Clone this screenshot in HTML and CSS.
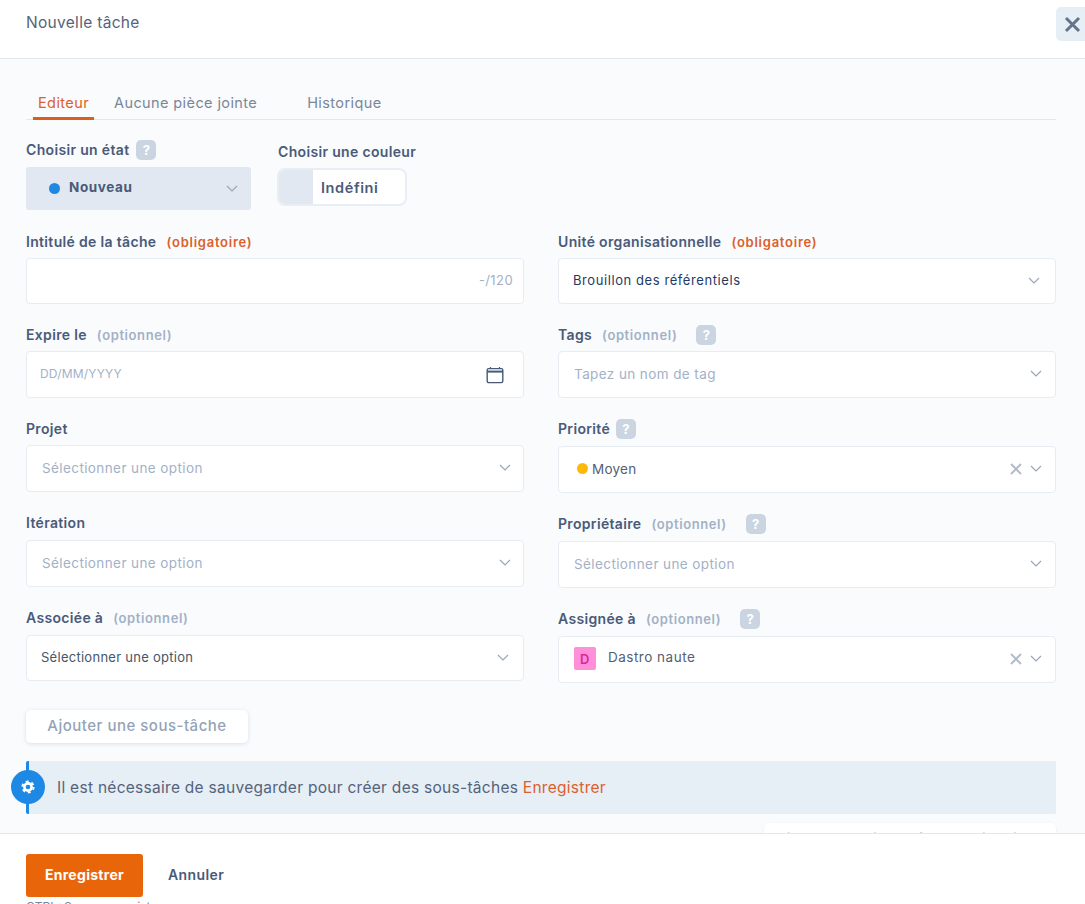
FILE: index.html
```html
<!DOCTYPE html>
<html lang="fr">
<head>
    <meta charset="UTF-8">
    <meta name="viewport" content="width=device-width, initial-scale=1.0">
    <title>Nouvelle tâche</title>
    <link rel="stylesheet" href="styles.css">
</head>
<body>
    <div class="modal">
        <header class="modal-header">
            <h1>Nouvelle tâche</h1>
            <button class="close-btn" type="button" aria-label="Fermer">
                <svg width="17" height="17" viewBox="0 0 17 17"><path d="M2 2l13 13M15 2L2 15" stroke="#64748b" stroke-width="3" fill="none"/></svg>
            </button>
        </header>

        <main class="modal-body">
            <nav class="tabs">
                <a class="tab active">Editeur</a>
                <a class="tab tab-files">Aucune pièce jointe</a>
                <a class="tab tab-history">Historique</a>
            </nav>

            <div class="state-row">
                <div class="state-col">
                    <div class="label-row">
                        <span class="label">Choisir un état</span>
                        <span class="help">?</span>
                    </div>
                    <div class="state-select">
                        <span class="dot dot-blue"></span>
                        <span class="state-name">Nouveau</span>
                        <svg class="chevron" width="12" height="7" viewBox="0 0 12 7"><path d="M1 1l5 5 5-5" stroke="#9aa6b6" stroke-width="1.2" fill="none"/></svg>
                    </div>
                </div>
                <div class="color-col">
                    <span class="label">Choisir une couleur</span>
                    <div class="color-toggle">
                        <span class="color-swatch"></span>
                        <span class="color-name">Indéfini</span>
                    </div>
                </div>
            </div>

            <div class="form-grid">
                <div class="form-col">
                    <div class="field">
                        <div class="label-row-field"><span class="label">Intitulé de la tâche</span><span class="note note-req">(obligatoire)</span></div>
                        <div class="box box-short"><span class="counter">-/120</span></div>
                    </div>
                    <div class="field">
                        <div class="label-row-field"><span class="label">Expire le</span><span class="note">(optionnel)</span></div>
                        <div class="box box-date">
                            <span class="date-text">DD/MM/YYYY</span>
                            <svg class="calendar" width="18" height="18" viewBox="0 0 18 18"><rect x="1.2" y="2.6" width="15.6" height="14" rx="1.5" fill="none" stroke="#475a78" stroke-width="1.4"/><path d="M1.2 5.6h15.6" stroke="#475a78" stroke-width="2"/><path d="M4.5 1v2M13.5 1v2" stroke="#475a78" stroke-width="1.2"/></svg>
                        </div>
                    </div>
                    <div class="field">
                        <div class="label-row-field"><span class="label">Projet</span></div>
                        <div class="box"><span class="placeholder">Sélectionner une option</span><svg class="chevron" width="12" height="7" viewBox="0 0 12 7"><path d="M1 1l5 5 5-5" stroke="#9aa6b6" stroke-width="1.2" fill="none"/></svg></div>
                    </div>
                    <div class="field">
                        <div class="label-row-field tall"><span class="label">Itération</span></div>
                        <div class="box"><span class="placeholder">Sélectionner une option</span><svg class="chevron" width="12" height="7" viewBox="0 0 12 7"><path d="M1 1l5 5 5-5" stroke="#9aa6b6" stroke-width="1.2" fill="none"/></svg></div>
                    </div>
                    <div class="field">
                        <div class="label-row-field tall"><span class="label">Associée à</span><span class="note">(optionnel)</span></div>
                        <div class="box box-short"><span class="value-dark">Sélectionner une option</span><svg class="chevron" width="12" height="7" viewBox="0 0 12 7"><path d="M1 1l5 5 5-5" stroke="#9aa6b6" stroke-width="1.2" fill="none"/></svg></div>
                    </div>
                </div>

                <div class="form-col form-col-right">
                    <div class="field">
                        <div class="label-row-field"><span class="label">Unité organisationnelle</span><span class="note note-req">(obligatoire)</span></div>
                        <div class="box box-short"><span class="value-navy">Brouillon des référentiels</span><svg class="chevron" width="12" height="7" viewBox="0 0 12 7"><path d="M1 1l5 5 5-5" stroke="#9aa6b6" stroke-width="1.2" fill="none"/></svg></div>
                    </div>
                    <div class="field">
                        <div class="label-row-field"><span class="label">Tags</span><span class="note">(optionnel)</span><span class="help help-far">?</span></div>
                        <div class="box"><span class="placeholder">Tapez un nom de tag</span><svg class="chevron" width="12" height="7" viewBox="0 0 12 7"><path d="M1 1l5 5 5-5" stroke="#9aa6b6" stroke-width="1.2" fill="none"/></svg></div>
                    </div>
                    <div class="field">
                        <div class="label-row-field tall"><span class="label">Priorité</span><span class="help help-near">?</span></div>
                        <div class="box">
                            <span class="priority"><span class="dot dot-yellow"></span>Moyen</span>
                            <svg class="clear" width="12" height="12" viewBox="0 0 12 12"><path d="M1 1l10 10M11 1L1 11" stroke="#b4bcc9" stroke-width="2" fill="none"/></svg>
                            <svg class="chevron" width="12" height="7" viewBox="0 0 12 7"><path d="M1 1l5 5 5-5" stroke="#9aa6b6" stroke-width="1.2" fill="none"/></svg>
                        </div>
                    </div>
                    <div class="field">
                        <div class="label-row-field tall"><span class="label">Propriétaire</span><span class="note">(optionnel)</span><span class="help help-far">?</span></div>
                        <div class="box"><span class="placeholder">Sélectionner une option</span><svg class="chevron" width="12" height="7" viewBox="0 0 12 7"><path d="M1 1l5 5 5-5" stroke="#9aa6b6" stroke-width="1.2" fill="none"/></svg></div>
                    </div>
                    <div class="field">
                        <div class="label-row-field tall"><span class="label">Assignée à</span><span class="note">(optionnel)</span><span class="help help-far">?</span></div>
                        <div class="box">
                            <span class="user"><span class="avatar">D</span><span class="user-name">Dastro naute</span></span>
                            <svg class="clear" width="12" height="12" viewBox="0 0 12 12"><path d="M1 1l10 10M11 1L1 11" stroke="#b4bcc9" stroke-width="2" fill="none"/></svg>
                            <svg class="chevron" width="12" height="7" viewBox="0 0 12 7"><path d="M1 1l5 5 5-5" stroke="#9aa6b6" stroke-width="1.2" fill="none"/></svg>
                        </div>
                    </div>
                </div>
            </div>

            <button class="subtask-btn" type="button">Ajouter une sous-tâche</button>

            <div class="alert">
                <span class="alert-icon">
                    <svg width="14" height="14" viewBox="0 0 14 14"><circle cx="7" cy="7" r="3.6" fill="none" stroke="#fff" stroke-width="2.6"/><circle cx="7" cy="7" r="5.6" fill="none" stroke="#fff" stroke-width="2" stroke-dasharray="2.9 2.96"/></svg>
                </span>
                <span>Il est nécessaire de sauvegarder pour créer des sous-tâches <a class="alert-link">Enregistrer</a></span>
            </div>

            <div class="peek-card">Ajouter un modèle de tâche depuis la liste</div>
        </main>

        <footer class="modal-footer">
            <div class="footer-actions">
                <button class="save-btn" type="button">Enregistrer</button>
                <button class="cancel-btn" type="button">Annuler</button>
            </div>
            <div class="shortcut">CTRL+S pour enregistrer</div>
        </footer>
    </div>
</body>
</html>
```

FILE: styles.css
```css
* {
    box-sizing: border-box;
}

html, body {
    height: 100%;
}

body {
    margin: 0;
    font-family: Inter, "Noto Sans", sans-serif;
    color: #475569;
    background-color: #fff;
    overflow: hidden;
}

.modal {
    height: 904px;
    display: flex;
    flex-direction: column;
    overflow: hidden;
}

/* header */
.modal-header {
    height: 59px;
    flex-shrink: 0;
    display: flex;
    justify-content: space-between;
    align-items: flex-start;
    padding-left: 26px;
    background-color: #fff;
    border-bottom: 1px solid #e2e8f0;
}

h1 {
    margin: 12px 0 0;
    font-size: 15.5px;
    line-height: 22px;
    font-weight: 400;
    letter-spacing: 0.3px;
    color: #55637b;
}

.close-btn {
    width: 29px;
    height: 34px;
    margin-top: 7px;
    padding: 0 0 0 8px;
    display: flex;
    align-items: center;
    border: none;
    border-radius: 5px 0 0 5px;
    background-color: #e6eef6;
}

/* body */
.modal-body {
    flex: 1;
    min-height: 0;
    overflow: hidden;
    padding: 0 29px 0 26px;
    background-color: #f9fbfd;
}

.tabs {
    height: 61px;
    display: flex;
    align-items: flex-end;
    border-bottom: 1px solid #e2e8f0;
}

.tab {
    height: 33px;
    padding: 5px 5px 0;
    margin-bottom: -1px;
    font-size: 14.5px;
    line-height: 22px;
    letter-spacing: 0.4px;
    color: #7b8699;
}

.tab.active {
    margin-left: 7px;
    color: #dc5f2c;
    border-bottom: 3px solid #d9601a;
}

.tab-files {
    margin-left: 15px;
}

.tab-history {
    margin-left: 40px;
}

.state-row {
    display: flex;
    margin-top: 20px;
    gap: 27px;
}

.state-col {
    width: 225px;
}

.label-row {
    height: 20px;
    display: flex;
    align-items: center;
    gap: 7px;
    margin-bottom: 7px;
}

.label {
    font-size: 14px;
    line-height: 20px;
    font-weight: 600;
    letter-spacing: 0.33px;
    color: #4a5a78;
}

.help {
    width: 20px;
    height: 20px;
    display: flex;
    align-items: center;
    justify-content: center;
    border-radius: 5px;
    background-color: #cbd5e1;
    color: #fff;
    font-size: 13px;
    font-weight: 700;
}

.help-far {
    margin-left: 9px;
}

.help-near {
    margin-left: -4px;
}

.state-select {
    height: 43px;
    display: flex;
    align-items: center;
    padding: 0 13px 3px 23px;
    border-radius: 3px;
    background-color: #e2e8f1;
}

.dot {
    display: inline-block;
    border-radius: 50%;
}

.dot-blue {
    width: 11px;
    height: 11px;
    margin-top: 3px;
    background-color: #1e88e5;
}

.dot-yellow {
    width: 11px;
    height: 11px;
    background-color: #ffb908;
}

.state-name {
    margin-left: 9px;
    font-size: 13.5px;
    font-weight: 700;
    letter-spacing: 0.6px;
    color: #4a5a78;
}

.state-select .chevron {
    margin-left: auto;
    margin-top: 3px;
}

.color-col {
    padding-top: 2px;
}

.color-col .label {
    display: block;
    margin-bottom: 6px;
}

.color-toggle {
    width: 130px;
    height: 38px;
    margin-left: -1px;
    display: flex;
    align-items: center;
    border: 2px solid #e9eef5;
    border-radius: 8px;
    background-color: #fff;
    overflow: hidden;
}

.color-swatch {
    width: 34px;
    height: 100%;
    background-color: #e2e8f1;
}

.color-name {
    margin-left: 8px;
    font-size: 14.5px;
    font-weight: 600;
    letter-spacing: 0.6px;
    color: #4a5a78;
}

/* form */
.form-grid {
    display: grid;
    grid-template-columns: 498px 498px;
    column-gap: 34px;
    margin-top: 22px;
}

.field {
    margin-bottom: 21px;
}

.label-row-field {
    height: 26px;
    display: flex;
    gap: 10px;
}

.label-row-field.tall {
    height: 27px;
}

.label-row-field .label {
    white-space: nowrap;
}

.note {
    font-size: 13px;
    line-height: 20px;
    font-weight: 600;
    letter-spacing: 0.6px;
    color: #a3b1c6;
}

.note-req {
    letter-spacing: 0.75px;
    color: #dc5f2c;
}

.box {
    height: 47px;
    display: flex;
    align-items: center;
    padding: 0 12px 2px 15px;
    border: 1px solid #e7ecf3;
    border-radius: 4px;
    background-color: #fff;
    font-size: 13px;
}

.box-short {
    height: 46px;
    padding-left: 14px;
    padding-right: 14px;
}

.form-col-right .box {
    padding-right: 13px;
}

.form-col-right .box-short {
    padding-right: 15px;
}

.box .chevron {
    margin-left: auto;
}

.box .clear + .chevron {
    margin-left: 8px;
}

.box .clear {
    margin-left: auto;
}

.counter {
    margin-left: auto;
    margin-right: -4px;
    letter-spacing: 0.4px;
    color: #a3b1c6;
    font-size: 13px;
}

.box-date {
    justify-content: space-between;
    padding: 0 19px 2px 13px;
}

.calendar {
    margin-top: 2px;
}

.date-text {
    font-size: 12px;
    letter-spacing: 0.2px;
    color: #a3b1c6;
}

.placeholder {
    font-size: 13.5px;
    letter-spacing: 0.4px;
    color: #a3b1c6;
}

.value-dark {
    letter-spacing: 0.27px;
    color: #475569;
}

.value-navy {
    letter-spacing: 0.58px;
    color: #1f3a68;
}

.priority {
    display: flex;
    align-items: center;
    gap: 4px;
    margin-left: 3px;
    font-size: 13.5px;
    letter-spacing: 0.25px;
    color: #556074;
}

.user {
    display: flex;
    align-items: center;
    font-size: 13.5px;
    letter-spacing: 0.5px;
    color: #556074;
}

.user-name {
    margin-bottom: 3px;
}

.avatar {
    width: 22px;
    height: 23px;
    margin-right: 12px;
    display: flex;
    align-items: center;
    justify-content: center;
    border-radius: 2px;
    background-color: #ff8fd8;
    color: #e0259b;
    font-size: 13px;
    font-weight: 600;
}

.subtask-btn {
    display: block;
    width: 222px;
    height: 33px;
    margin-top: 6px;
    padding: 0 0 2px;
    border: none;
    border-radius: 5px;
    background-color: #fff;
    box-shadow: 0 1px 4px rgba(100, 116, 139, 0.2);
    color: #94a3b8;
    font-family: inherit;
    font-size: 15px;
    font-weight: 500;
    letter-spacing: 0.5px;
}

.alert {
    position: relative;
    height: 53px;
    margin-top: 18px;
    display: flex;
    align-items: center;
    padding-left: 28px;
    border-left: 3px solid #1e88e5;
    border-radius: 2px;
    background-color: #e6eef6;
    font-size: 15.5px;
    letter-spacing: 0.28px;
    color: #55637b;
}

/* the round icon sits over the left bar */
.alert-icon {
    position: absolute;
    left: -18px;
    top: 9px;
    width: 34px;
    height: 34px;
    display: flex;
    align-items: center;
    justify-content: center;
    border-radius: 50%;
    background-color: #1e88e5;
}

.alert-link {
    color: #dc5f2c;
}

.peek-card {
    width: 292px;
    height: 30px;
    margin: 9px 0 0 auto;
    padding: 7px 14px;
    border-radius: 5px;
    background-color: #fff;
    box-shadow: 0 1px 3px rgba(100, 116, 139, 0.1);
    font-size: 13px;
    color: #b4bcc9;
    white-space: nowrap;
    overflow: hidden;
}

/* footer */
.modal-footer {
    height: 71px;
    flex-shrink: 0;
    padding: 20px 0 0 26px;
    background-color: #fff;
    border-top: 1px solid #e2e8f0;
    overflow: hidden;
}

.footer-actions {
    display: flex;
    align-items: center;
    gap: 25px;
}

.save-btn {
    width: 117px;
    height: 43px;
    padding: 0 0 2px;
    border: none;
    border-radius: 3px;
    background-color: #e8650a;
    color: #fff;
    font-family: inherit;
    font-size: 14px;
    font-weight: 700;
    letter-spacing: 0.3px;
}

.cancel-btn {
    padding: 0 0 2px;
    border: none;
    background: none;
    color: #4a5a78;
    font-family: inherit;
    font-size: 14px;
    font-weight: 600;
    letter-spacing: 0.4px;
}

.shortcut {
    margin-top: 2px;
    font-size: 12px;
    line-height: 16px;
    color: #7b8699;
}
```
